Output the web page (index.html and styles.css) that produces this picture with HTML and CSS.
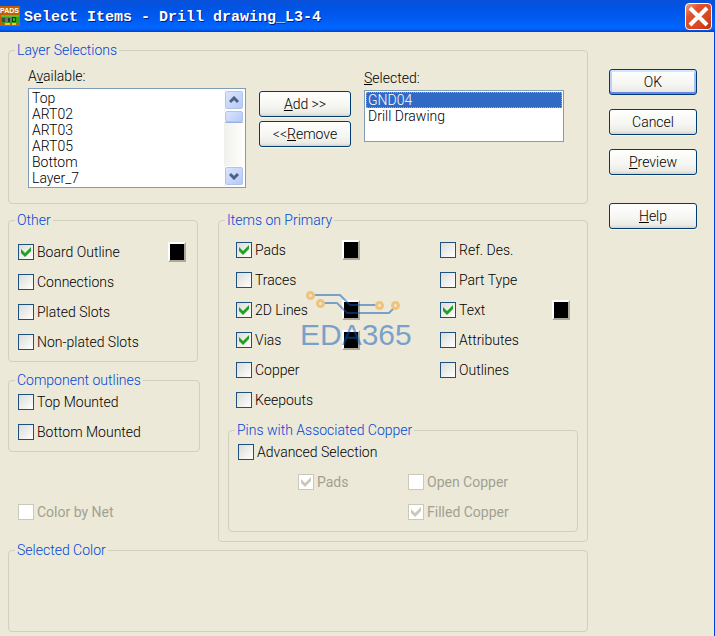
FILE: index.html
```html
<!DOCTYPE html>
<html lang="en">

<head>
    <meta charset="UTF-8">
    <meta name="viewport" content="width=device-width, initial-scale=1.0">
    <title>Select Items - Drill drawing_L3-4</title>
    <link rel="stylesheet" href="styles.css">
</head>

<body>
    <header class="titlebar">
        <svg class="app-icon" viewBox="0 0 20 20" aria-hidden="true">
            <rect width="20" height="20" fill="#c06000" />
            <text x="0" y="7" class="app-icon-text">PADS</text>
            <rect x="1" y="9" width="18" height="8" fill="#30a020" />
            <rect x="1" y="9" width="18" height="2" fill="#58c030" />
            <rect x="2" y="12" width="3" height="4" fill="#404848" />
            <rect x="6" y="11" width="5" height="5" fill="#707870" />
            <rect x="8" y="12" width="2" height="4" fill="#303830" />
            <rect x="12" y="11" width="4" height="5" fill="#104010" />
            <rect x="13" y="12" width="2" height="3" fill="#40b020" />
            <rect x="5" y="17" width="5" height="2" fill="#ffc020" />
            <rect x="12" y="17" width="4" height="2" fill="#ffc020" />
        </svg>
        <h1>Select Items - Drill drawing_L3-4</h1>
        <button class="close" type="button" aria-label="Close">
            <svg viewBox="0 0 25 25" aria-hidden="true">
                <path d="M4 4 L21 21 M21 4 L4 21" stroke="#fff" stroke-width="4" fill="none" />
            </svg>
        </button>
    </header>

    <form class="dialog">
        <main>
            <fieldset>
                <legend>Layer Selections</legend>
                <div class="layers">
                    <div class="available">
                        <label for="available">A<u>v</u>ailable:</label>
                        <div class="listbox">
                            <select id="available" size="6">
                                <option>Top</option>
                                <option>ART02</option>
                                <option>ART03</option>
                                <option>ART05</option>
                                <option>Bottom</option>
                                <option>Layer_7</option>
                            </select>
                            <div class="scrollbar" aria-hidden="true">
                                <span class="arrow"><svg viewBox="0 0 10 8"><path d="M1 6 L5 2 L9 6" /></svg></span>
                                <span class="thumb"></span>
                                <span class="arrow down"><svg viewBox="0 0 10 8"><path d="M1 2 L5 6 L9 2" /></svg></span>
                            </div>
                        </div>
                    </div>
                    <div class="move">
                        <button type="button"><u>A</u>dd &gt;&gt;</button>
                        <button type="button">&lt;&lt;<u>R</u>emove</button>
                    </div>
                    <div class="selected">
                        <label for="selected"><u>S</u>elected:</label>
                        <div class="listbox">
                            <select id="selected" size="3">
                                <option selected>GND04</option>
                                <option>Drill Drawing</option>
                            </select>
                        </div>
                    </div>
                </div>
            </fieldset>

            <div class="columns">
                <div class="left">
                    <fieldset class="other">
                        <legend>Other</legend>
                        <div class="checks">
                            <div class="row">
                                <label><input type="checkbox" checked>Board Outline</label>
                                <button class="swatch" type="button" aria-label="Board Outline color"></button>
                            </div>
                            <div class="row"><label><input type="checkbox">Connections</label></div>
                            <div class="row"><label><input type="checkbox">Plated Slots</label></div>
                            <div class="row"><label><input type="checkbox">Non-plated Slots</label></div>
                        </div>
                    </fieldset>

                    <fieldset>
                        <legend>Component outlines</legend>
                        <div class="checks tight">
                            <div class="row"><label><input type="checkbox">Top Mounted</label></div>
                            <div class="row"><label><input type="checkbox">Bottom Mounted</label></div>
                        </div>
                    </fieldset>

                    <div class="row by-net"><label><input type="checkbox" disabled>Color by Net</label></div>
                </div>

                <fieldset class="items">
                    <legend>Items on Primary</legend>
                    <div class="items-grid">
                        <div class="checks">
                            <div class="row">
                                <label><input type="checkbox" checked>Pads</label>
                                <button class="swatch" type="button" aria-label="Pads color"></button>
                            </div>
                            <div class="row"><label><input type="checkbox">Traces</label></div>
                            <div class="row">
                                <label><input type="checkbox" checked>2D Lines</label>
                                <button class="swatch" type="button" aria-label="2D Lines color"></button>
                            </div>
                            <div class="row">
                                <label><input type="checkbox" checked>Vias</label>
                                <button class="swatch" type="button" aria-label="Vias color"></button>
                            </div>
                            <div class="row"><label><input type="checkbox">Copper</label></div>
                            <div class="row"><label><input type="checkbox">Keepouts</label></div>
                        </div>
                        <div class="checks">
                            <div class="row"><label><input type="checkbox">Ref. Des.</label></div>
                            <div class="row"><label><input type="checkbox">Part Type</label></div>
                            <div class="row">
                                <label><input type="checkbox" checked>Text</label>
                                <button class="swatch" type="button" aria-label="Text color"></button>
                            </div>
                            <div class="row"><label><input type="checkbox">Attributes</label></div>
                            <div class="row"><label><input type="checkbox">Outlines</label></div>
                        </div>
                        <svg class="watermark" viewBox="0 0 114 62" aria-hidden="true">
                            <g fill="none" stroke="#0a5abe" stroke-width="2">
                                <path d="M14 7 H40 L50 17 H76" />
                                <path d="M24 15 H37 L47 25 H89 L93 21" />
                            </g>
                            <g fill="none" stroke="#f89d1e" stroke-width="3">
                                <circle cx="10.5" cy="7.5" r="3" />
                                <circle cx="20.5" cy="15.5" r="3" />
                                <circle cx="79.5" cy="17.5" r="3" />
                                <circle cx="95.5" cy="17.5" r="3" />
                            </g>
                            <text x="0" y="57">EDA365</text>
                        </svg>
                    </div>

                    <fieldset class="pins">
                        <legend>Pins with Associated Copper</legend>
                        <div class="checks tight">
                            <div class="row"><label><input type="checkbox">Advanced Selection</label></div>
                            <div class="pins-grid">
                                <div class="row"><label><input type="checkbox" checked disabled>Pads</label></div>
                                <div class="row"><label><input type="checkbox" disabled>Open Copper</label></div>
                                <div class="row filled"><label><input type="checkbox" checked disabled>Filled Copper</label></div>
                            </div>
                        </div>
                    </fieldset>
                </fieldset>
            </div>

            <fieldset class="color-box">
                <legend>Selected Color</legend>
            </fieldset>
        </main>

        <div class="actions">
            <button class="default" type="button">OK</button>
            <button type="button">Cancel</button>
            <button type="button"><u>P</u>review</button>
            <button class="help" type="button"><u>H</u>elp</button>
        </div>
    </form>
</body>

</html>
```

FILE: styles.css
```css
* {
    box-sizing: border-box;
}

body {
    margin: 0;
    min-height: 100vh;
    display: flex;
    flex-direction: column;
    background-color: #ece9d8;
    color: #000;
    font-family: Roboto, "Liberation Sans", sans-serif;
    font-size: 14px;
    font-weight: 300;
    line-height: 16px;
}

button,
select,
option,
input {
    font: inherit;
    color: inherit;
    margin: 0;
}

/* title bar */
.titlebar {
    display: flex;
    align-items: center;
    height: 32px;
    padding-right: 3px;
    background: linear-gradient(#0a50d8 0, #0054e3 20%, #0058ee 50%, #0066ff 85%, #0060f8 92%, #0040c8 100%);
}

.app-icon {
    width: 20px;
    height: 20px;
}

.app-icon-text {
    font-family: "Liberation Sans", sans-serif;
    font-size: 7px;
    font-weight: bold;
    fill: #fff;
}

.titlebar h1 {
    flex: 1;
    margin: 0 0 0 4px;
    padding-top: 3px;
    color: #fff;
    font-family: "Liberation Mono", monospace;
    font-size: 15px;
    font-weight: bold;
    text-shadow: 1px 1px #0a1883;
}

.close {
    width: 27px;
    height: 27px;
    padding: 0;
    border: 1px solid #fff;
    border-radius: 4px;
    background: linear-gradient(135deg, #f0a088 0%, #e0502c 30%, #d84820 70%, #b83010 100%);
}

.close svg {
    display: block;
}

/* dialog */
.dialog {
    flex: 1;
    display: flex;
    gap: 21px;
    padding: 10px 17px 4px 8px;
    border-right: 1px solid #0040d8;
}

main {
    flex: 1;
}

fieldset {
    min-width: 0;
    margin: 0;
    padding: 0;
    border: 1px solid #d0d0bf;
    border-radius: 4px;
}

legend {
    margin-left: 6px;
    padding: 0 2px;
    color: #0046d5;
}

/* layer selections */
.layers {
    display: flex;
    gap: 13px;
    padding: 10px 23px 15px 19px;
}

.layers label {
    display: block;
    margin-bottom: 4px;
}

.available {
    flex: 218;
}

.selected {
    flex: 200;
    padding-top: 2px;
}

.move {
    display: flex;
    flex-direction: column;
    gap: 4px;
    width: 92px;
    padding-top: 23px;
}

.listbox {
    display: flex;
    padding: 1px;
    border: 1px solid #7f9db9;
    background-color: #fff;
}

.listbox select {
    flex: 1;
    min-width: 0;
    padding: 0;
    border: 0;
    outline: none;
    overflow: hidden;
    background-color: #fff;
}

.listbox #available {
    height: 96px;
}

.listbox #selected {
    height: 48px;
}

.listbox option {
    height: 16px;
    min-height: 16px;
    padding: 0 2px;
    line-height: 16px;
}

.listbox option:checked {
    background: #316ac5 linear-gradient(#316ac5, #316ac5);
    color: #fff;
    outline: 1px dotted #e0a040;
    outline-offset: -1px;
}

.scrollbar {
    display: flex;
    flex-direction: column;
    width: 20px;
    background: linear-gradient(90deg, #f0f0ec, #fefefb);
}

.arrow,
.thumb {
    display: flex;
    align-items: center;
    justify-content: center;
    height: 20px;
    border: 1px solid #fff;
    border-radius: 3px;
    background: linear-gradient(135deg, #dce6ff, #b4c8f6);
    box-shadow: inset 0 0 0 1px #b0c4ee;
}

.thumb {
    height: 13px;
    border-bottom-color: #98b0e0;
}

.arrow.down {
    margin-top: auto;
}

.arrow svg {
    width: 10px;
    height: 8px;
    fill: none;
    stroke: #4d6185;
    stroke-width: 3;
}

/* buttons */
.move button,
.actions button {
    height: 26px;
    padding: 0;
    border: 1px solid #003c74;
    border-radius: 3px;
    background: linear-gradient(#fff, #f5f5f1 60%, #ecebe5 88%, #d8d0c4);
    box-shadow: 0 1px #f8f6ee;
}

.actions {
    display: flex;
    flex-direction: column;
    gap: 14px;
    width: 88px;
    padding-top: 27px;
}

.actions .default {
    box-shadow: inset 0 2px #cee7ff, inset 0 -2px #6982ee, inset 2px 0 #bcd0f4, inset -2px 0 #a8c0f0;
}

.actions .help {
    margin-top: 14px;
}

/* check boxes */
.columns {
    display: flex;
    gap: 18px;
    margin-top: 8px;
}

.left {
    width: 192px;
}

.other {
    margin: 0 2px 10px 0;
}

.checks {
    display: flex;
    flex-direction: column;
    gap: 10px;
}

.other .checks {
    padding: 14px 11px 9px 9px;
}

.checks.tight {
    padding: 4px 9px 9px;
}

.row {
    display: flex;
    align-items: center;
    justify-content: space-between;
    height: 20px;
}

.row label {
    display: flex;
    align-items: center;
    gap: 3px;
    white-space: nowrap;
}

.row label:has(input:disabled) {
    color: #a1a192;
    font-weight: 400;
}

.by-net {
    margin-top: 50px;
    padding-left: 10px;
}

input[type="checkbox"] {
    appearance: none;
    width: 16px;
    height: 16px;
    border: 1px solid #1c5180;
    background: linear-gradient(135deg, #dcdcd7, #fff);
}

input[type="checkbox"]:checked::before {
    content: "";
    display: block;
    width: 14px;
    height: 14px;
    background-color: #21a121;
    clip-path: polygon(2px 4px, 6px 8px, 12px 2px, 12px 6px, 6px 12px, 2px 8px);
}

input[type="checkbox"]:disabled {
    border-color: #cac8bb;
    background: #fff;
}

input[type="checkbox"]:disabled::before {
    background-color: #cac8bb;
}

.swatch {
    width: 18px;
    height: 20px;
    padding: 0;
    border: 2px solid;
    border-color: #fff #aca899 #aca899 #fff;
    background-color: #000;
}

/* items on primary */
.items {
    flex: 1;
}

.items-grid {
    position: relative;
    display: grid;
    grid-template-columns: 124px 130px;
    justify-content: space-between;
    padding: 12px 17px;
}

.watermark {
    position: absolute;
    top: 60px;
    left: 81px;
    width: 114px;
    height: 62px;
    opacity: 0.5;
    pointer-events: none;
}

.watermark text {
    font-family: "Liberation Sans", sans-serif;
    font-size: 30px;
    font-weight: normal;
    fill: #0a5abe;
}

.pins {
    margin: 0 9px 9px;
}

.pins-grid {
    display: grid;
    grid-template-columns: 110px 1fr;
    row-gap: 10px;
    padding-left: 60px;
}

.filled {
    grid-column: 2;
}

.color-box {
    min-height: 90px;
}
```
